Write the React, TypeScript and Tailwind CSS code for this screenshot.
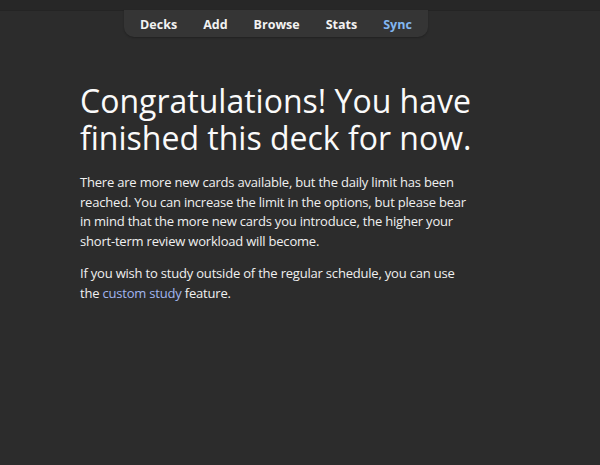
export default function App() {
  const navItems = ['Decks', 'Add', 'Browse', 'Stats', 'Sync'];

  return (
    <div className="min-h-[465px] bg-[#2c2c2c] text-[#f0f0f0] font-['Open_Sans',sans-serif]">
      {/* Top toolbar */}
      <div className="h-[11px] bg-[#272727] border-b border-[#242424]" />
      <div className="flex justify-center">
        <div className="-mt-px ml-[-48px] flex h-[27px] w-[304px] items-center justify-center gap-[26px] rounded-b-[10px] bg-[#353535] pt-[3px] text-[12.5px] font-bold shadow-[0_1px_2px_rgba(0,0,0,0.25)]">
          {navItems.map((item) => (
            <span key={item} className={item === 'Sync' ? 'text-[#82b6f0]' : 'text-[#f2f2f2]'}>
              {item}
            </span>
          ))}
        </div>
      </div>

      {/* Congrats content */}
      <div className="ml-[80px] mt-[45px] w-[440px]">
        <h1 className="text-[32px] leading-[37px] font-normal text-[#fafafa]">
          Congratulations! You have
          <br />
          finished this deck for now.
        </h1>
        <p className="mt-[17px] text-[13px] leading-[19.5px] tracking-[-0.2px]">
          There are more new cards available, but the daily limit has been
          <br />
          reached. You can increase the limit in the options, but please bear
          <br />
          in mind that the more new cards you introduce, the higher your
          <br />
          short-term review workload will become.
        </p>
        <p className="mt-[13px] text-[13px] leading-[19.5px] tracking-[-0.2px]">
          If you wish to study outside of the regular schedule, you can use
          <br />
          the <a className="text-[#a2b6f0]">custom study</a> feature.
        </p>
      </div>
    </div>
  );
}
